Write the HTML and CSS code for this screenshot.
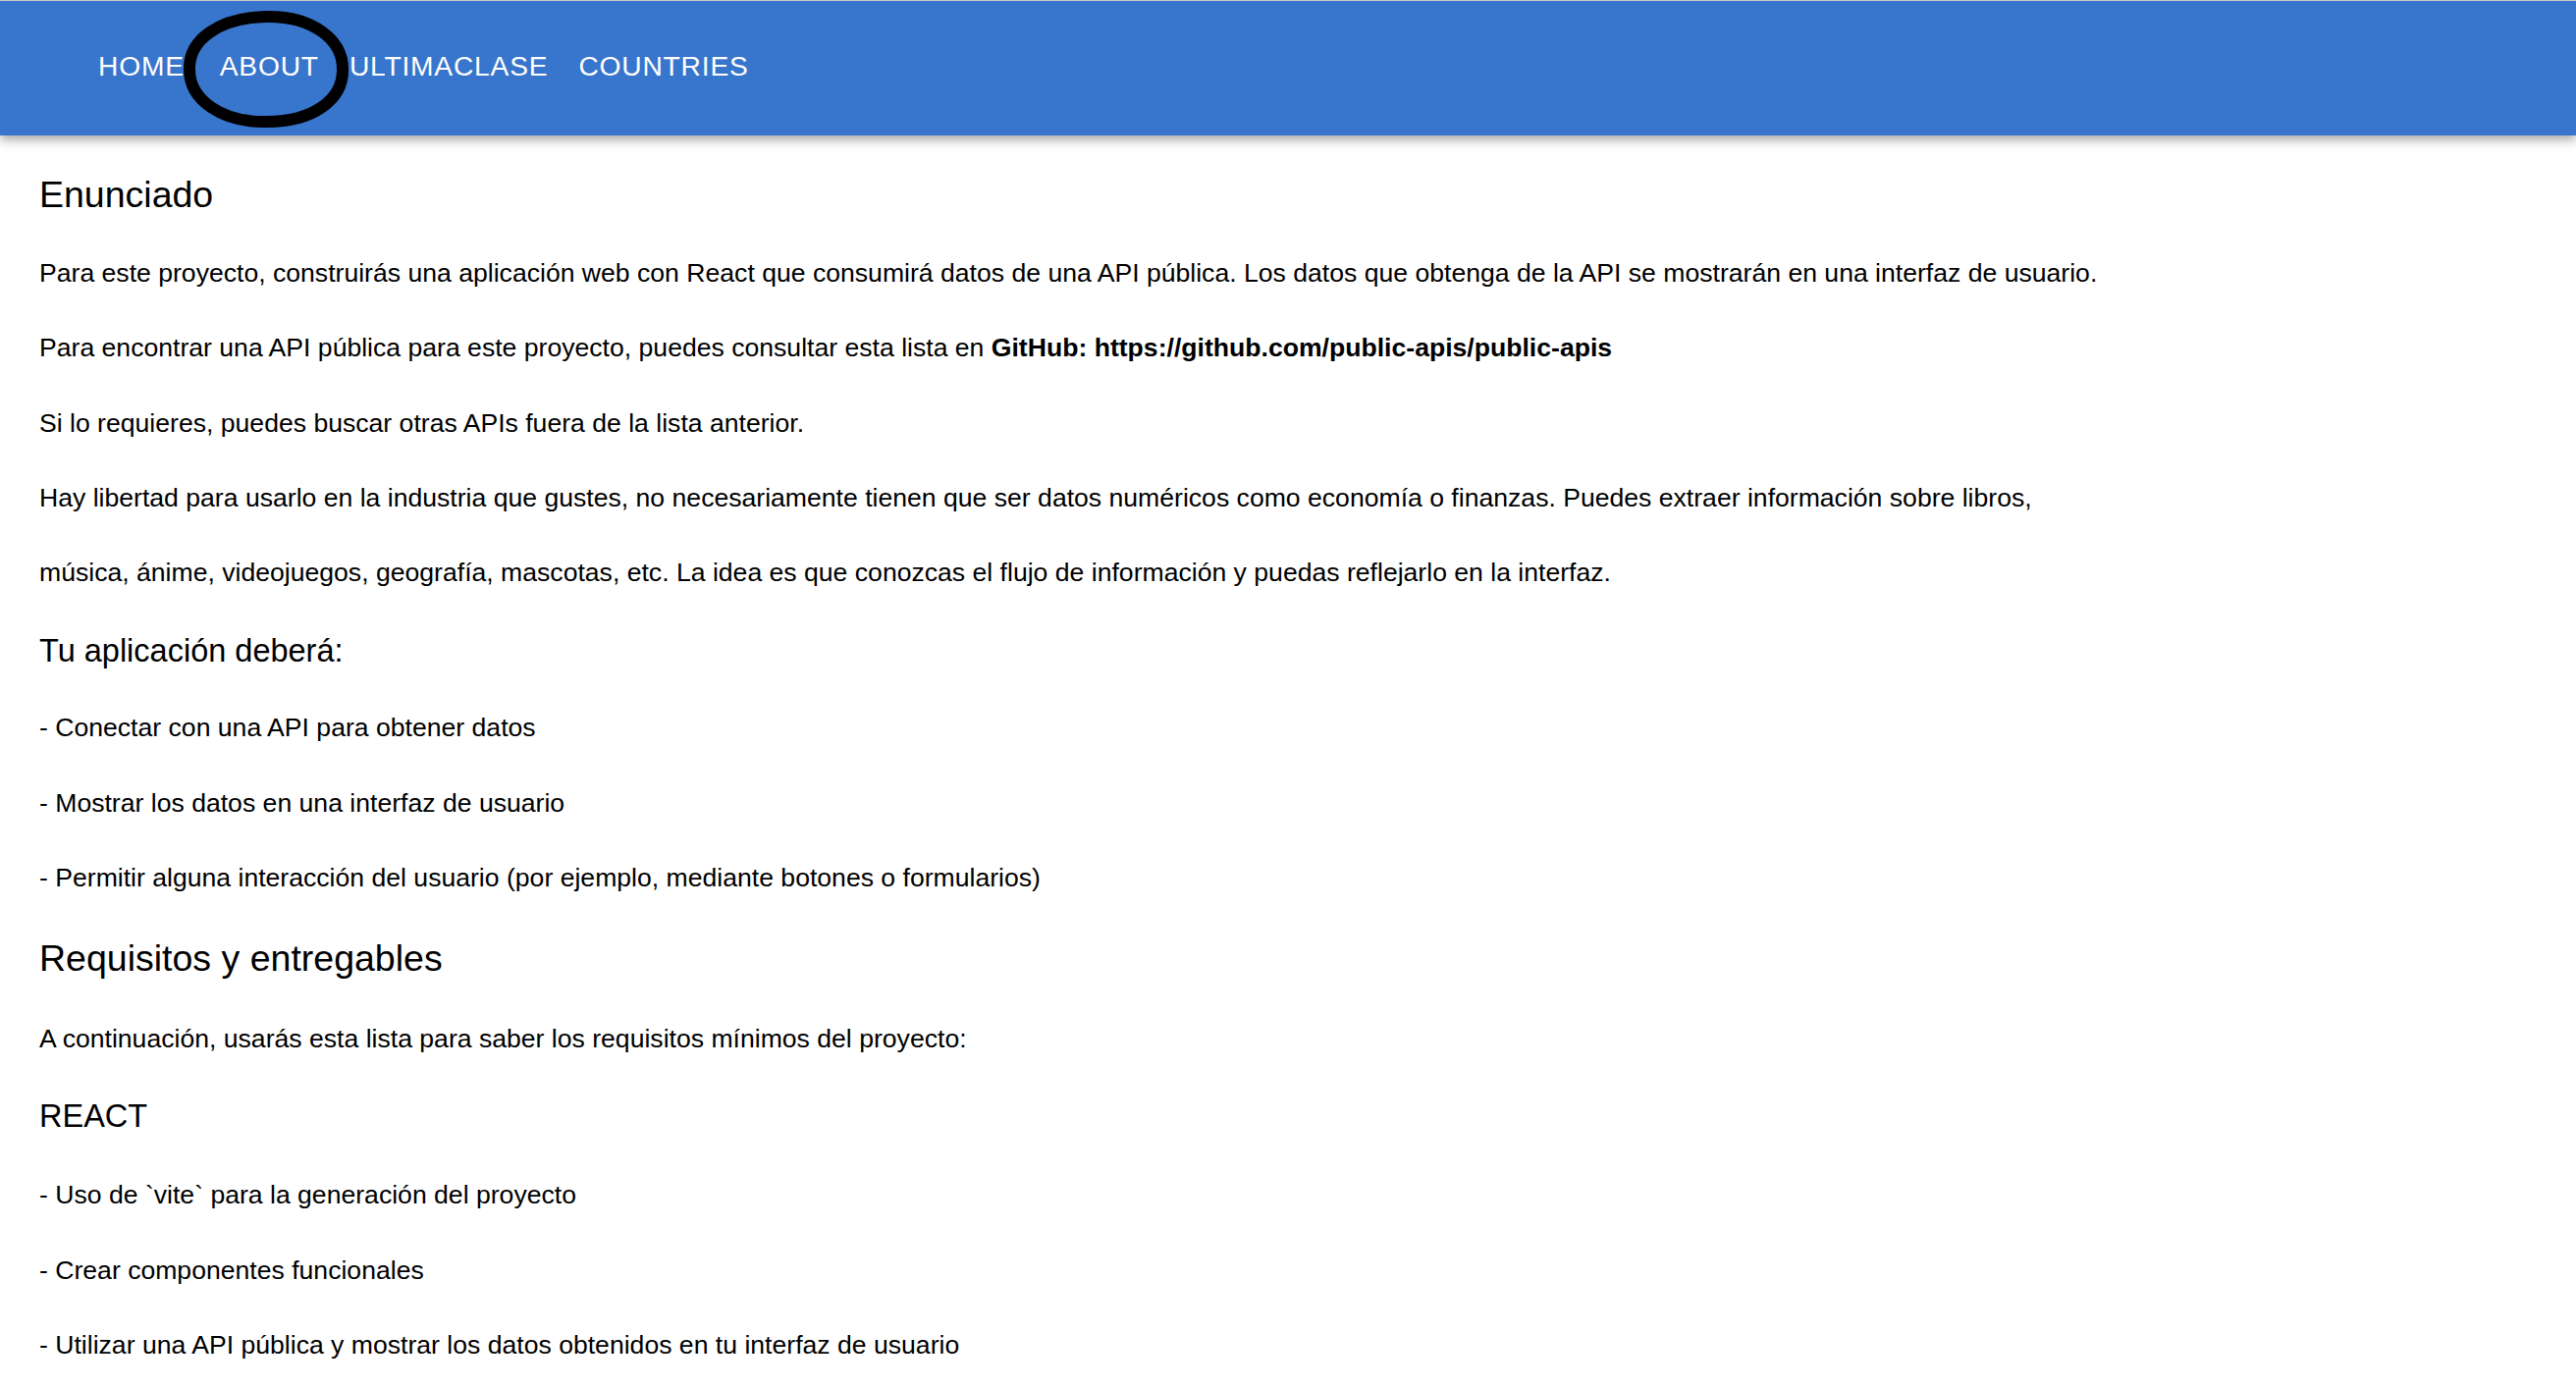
FILE: index.html
```html
<!DOCTYPE html>
<html lang="es">
<head>
<meta charset="utf-8">
<title>About</title>
<link rel="stylesheet" href="styles.css">
</head>
<body>
<header class="appbar">
  <nav class="nav">
    <a class="nav-link nav-home" href="#">Home</a>
    <a class="nav-link" href="#">About</a>
    <a class="nav-link" href="#">UltimaClase</a>
    <a class="nav-link" href="#">Countries</a>
  </nav>
  <svg class="annotation" width="190" height="140" viewBox="0 0 190 140" aria-hidden="true">
    <path d="M93 14 C141 13 171 38 171 67 C172 99 140 121 94 121 C47 122 15 98 15 68 C14 37 46 15 93 14 Z" fill="none" stroke="#000" stroke-width="12"/>
  </svg>
</header>
<main class="content">
  <h2 class="title-lg title-first">Enunciado</h2>
  <p class="text">Para este proyecto, construirás una aplicación web con React que consumirá datos de una API pública. Los datos que obtenga de la API se mostrarán en una interfaz de usuario.</p>
  <p class="text">Para encontrar una API pública para este proyecto, puedes consultar esta lista en <strong>GitHub: https://github.com/public-apis/public-apis</strong></p>
  <p class="text">Si lo requieres, puedes buscar otras APIs fuera de la lista anterior.</p>
  <p class="text">Hay libertad para usarlo en la industria que gustes, no necesariamente tienen que ser datos numéricos como economía o finanzas. Puedes extraer información sobre libros,</p>
  <p class="text">música, ánime, videojuegos, geografía, mascotas, etc. La idea es que conozcas el flujo de información y puedas reflejarlo en la interfaz.</p>
  <h3 class="title-md">Tu aplicación deberá:</h3>
  <p class="text">- Conectar con una API para obtener datos</p>
  <p class="text">- Mostrar los datos en una interfaz de usuario</p>
  <p class="text">- Permitir alguna interacción del usuario (por ejemplo, mediante botones o formularios)</p>
  <h2 class="title-lg title-req">Requisitos y entregables</h2>
  <p class="text">A continuación, usarás esta lista para saber los requisitos mínimos del proyecto:</p>
  <h3 class="title-md title-react">REACT</h3>
  <p class="text">- Uso de `vite` para la generación del proyecto</p>
  <p class="text">- Crear componentes funcionales</p>
  <p class="text">- Utilizar una API pública y mostrar los datos obtenidos en tu interfaz de usuario</p>
</main>
</body>
</html>
```
FILE: styles.css
```css
html, body {
  margin: 0;
  padding: 0;
  background: #ffffff;
}

body {
  font-family: "Liberation Sans", Arial, Helvetica, sans-serif;
  color: #000000;
}

.appbar {
  position: relative;
  height: 137px;
  border-top: 1px solid #c8c8c8;
  background: #3875cc;
  box-shadow: 0 3px 7px -2px rgba(0, 0, 0, 0.2),
              0 7px 8px 0 rgba(0, 0, 0, 0.14),
              0 2px 17px 0 rgba(0, 0, 0, 0.12);
  display: flex;
  align-items: center;
}

.nav {
  display: flex;
  align-items: center;
  gap: 31px;
  padding-left: 100px;
  padding-bottom: 5px;
}

.nav-link {
  color: #ffffff;
  text-decoration: none;
  text-transform: uppercase;
  font-size: 28.2px;
  letter-spacing: 0.8px;
  line-height: 40px;
}

.nav-home {
  margin-right: 5px;
}

.annotation {
  position: absolute;
  left: 178px;
  top: 2px;
}

.content {
  display: flex;
  flex-direction: column;
  align-items: flex-start;
  gap: 36.2px;
  padding: 40px 40px 40px 40px;
}

.text {
  margin: 0;
  font-size: 26.6px;
  line-height: 40px;
  white-space: nowrap;
}

.text strong {
  font-weight: 700;
}

.title-lg,
.title-md {
  margin: 0;
  font-weight: 400;
  line-height: 40px;
  white-space: nowrap;
}

.title-lg {
  font-size: 37.5px;
}

.title-md {
  font-size: 32.5px;
  margin: 4px 0 2px 0;
}

.title-first {
  margin-bottom: 4px;
}

.title-req {
  margin: 6px 0 6px 0;
}

.title-react {
  margin: 3px 0 4px 0;
}
```
